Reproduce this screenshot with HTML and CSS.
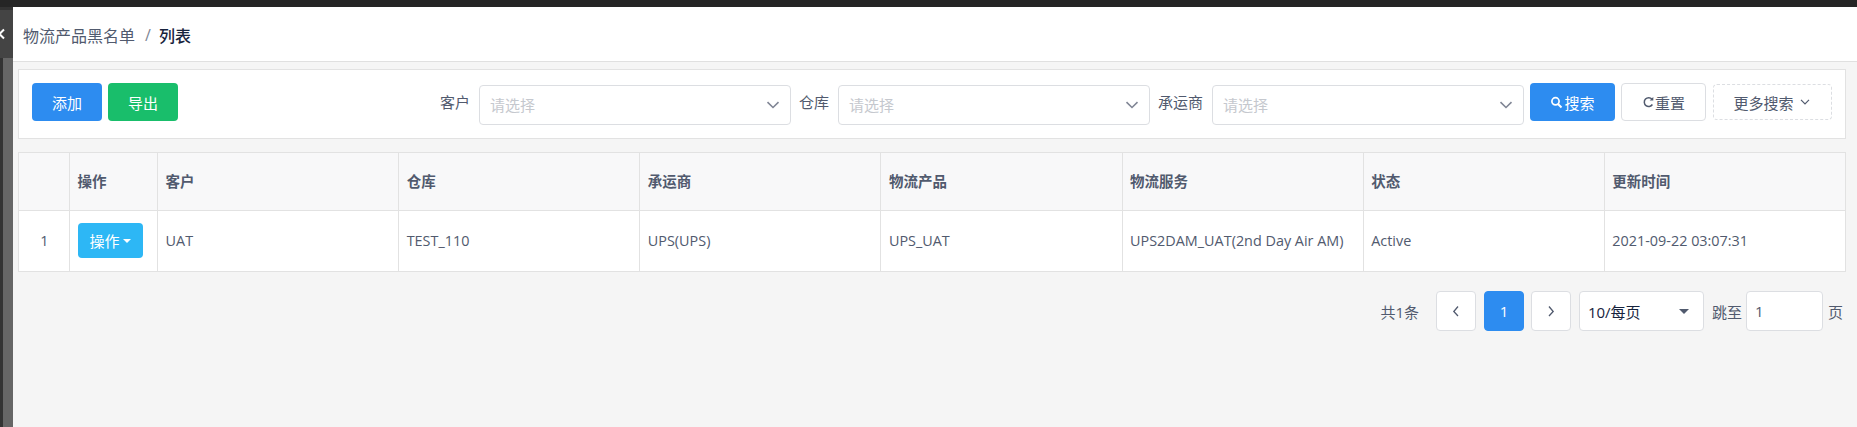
FILE: index.html
```html
<!DOCTYPE html>
<html lang="zh">
<head>
<meta charset="utf-8">
<title>物流产品黑名单</title>
<link rel="stylesheet" href="styles.css">
</head>
<body>
<div class="topbar"></div>
<div class="app">
  <aside class="rail">
    <div class="rail-handle"><svg width="8" height="12" viewBox="0 0 8 12"><path d="M7 1.500 2.500 6 7 10.500" fill="none" stroke="#fff" stroke-width="2"/></svg></div>
  </aside>
  <main class="main">
    <header class="crumbs"><span class="crumb">物流产品黑名单</span><span class="sep">/</span><strong class="crumb-cur">列表</strong></header>
    <div class="content">
      <section class="toolbar">
        <button class="btn btn-blue btn-wide">添加</button>
        <button class="btn btn-green btn-wide">导出</button>
        <div class="filters">
          <label class="flabel">客户</label>
          <div class="select"><span>请选择</span><svg width="14" height="8" viewBox="0 0 14 8"><path d="M1.500 1.200 7 6.500l5.500-5.300" fill="none" stroke="#808695" stroke-width="1.600"/></svg></div>
          <label class="flabel">仓库</label>
          <div class="select"><span>请选择</span><svg width="14" height="8" viewBox="0 0 14 8"><path d="M1.500 1.200 7 6.500l5.500-5.300" fill="none" stroke="#808695" stroke-width="1.600"/></svg></div>
          <label class="flabel">承运商</label>
          <div class="select"><span>请选择</span><svg width="14" height="8" viewBox="0 0 14 8"><path d="M1.500 1.200 7 6.500l5.500-5.300" fill="none" stroke="#808695" stroke-width="1.600"/></svg></div>
          <button class="btn btn-blue btn-icon"><svg width="13" height="13" viewBox="0 0 13 13"><circle cx="5.500" cy="5.300" r="3.600" fill="none" stroke="#fff" stroke-width="1.700"/><path d="m8 8 3.500 3.500" stroke="#fff" stroke-width="2"/></svg>搜索</button>
          <button class="btn btn-plain btn-icon"><svg width="12" height="13" viewBox="0 0 12 13"><path d="M10 3.200A4.400 4.400 0 1 0 10.400 8.500" fill="none" stroke="#515a6e" stroke-width="1.500"/><path d="M7.700 4.600h3.600V1z" fill="#515a6e"/></svg>重置</button>
          <button class="btn btn-dashed">更多搜索<svg width="10" height="6" viewBox="0 0 10 6"><path d="M1 .8 5 4.800 9 .8" fill="none" stroke="#515a6e" stroke-width="1.200"/></svg></button>
        </div>
      </section>
      <table class="grid">
        <colgroup><col class="c-idx"><col class="c-op"><col class="c-wide"><col class="c-wide"><col class="c-wide"><col class="c-wide"><col class="c-wide"><col class="c-wide"><col class="c-wide"></colgroup>
        <thead>
          <tr><th></th><th>操作</th><th>客户</th><th>仓库</th><th>承运商</th><th>物流产品</th><th>物流服务</th><th>状态</th><th>更新时间</th></tr>
        </thead>
        <tbody>
          <tr>
            <td class="idx">1</td>
            <td><button class="btn-op">操作<i class="caret"></i></button></td>
            <td>UAT</td><td>TEST_110</td><td>UPS(UPS)</td><td>UPS_UAT</td><td>UPS2DAM_UAT(2nd Day Air AM)</td><td>Active</td><td>2021-09-22 03:07:31</td>
          </tr>
        </tbody>
      </table>
      <nav class="pager">
        <span class="total">共1条</span>
        <a class="pg pg-prev"><svg width="8" height="12" viewBox="0 0 8 12"><path d="M6 1.500 1.800 6.500 6 11" fill="none" stroke="#515a6e" stroke-width="1.300"/></svg></a>
        <a class="pg pg-on">1</a>
        <a class="pg pg-next"><svg width="8" height="12" viewBox="0 0 8 12"><path d="M2 1.500 6.200 6.500 2 11" fill="none" stroke="#515a6e" stroke-width="1.300"/></svg></a>
        <div class="size">10/每页<i class="caret caret-dark"></i></div>
        <span class="jump">跳至</span>
        <div class="jump-input">1</div>
        <span class="jump-end">页</span>
      </nav>
    </div>
  </main>
</div>
</body>
</html>
```
FILE: styles.css
```css
* { box-sizing: border-box; }
html, body { margin: 0; height: 100%; }
body {
  display: flex;
  flex-direction: column;
  height: 427px;
  overflow: hidden;
  font-family: "Open Sans", "Noto Sans CJK SC", sans-serif;
  font-size: 15px;
  color: #515a6e;
  background: #f5f5f5;
}
.topbar { height: 7px; flex: none; background: #252525; }
.app { flex: 1; display: flex; min-height: 0; }
.rail {
  width: 13px;
  flex: none;
  position: relative;
  background: #666;
  border-left: 3px solid #333;
  border-top: 3px solid #333;
}
.rail-handle {
  position: absolute;
  left: -3px;
  top: 0;
  width: 13px;
  height: 48px;
  background: #444;
  display: flex;
  align-items: center;
}
.rail-handle svg { margin-left: -3px; }
.main { flex: 1; min-width: 0; display: flex; flex-direction: column; }
.crumbs {
  height: 55px;
  flex: none;
  background: #fff;
  border-bottom: 1px solid #e0e0e0;
  display: flex;
  align-items: center;
  padding: 1px 10px 0;
  font-size: 16px;
}
.crumb { color: #515a6e; }
.sep { color: #808695; margin: 0 8px 0 10px; }
.crumb-cur { color: #17233d; font-weight: 500; }
.content { padding: 7px 11px 0 5px; display: flex; flex-direction: column; }
.toolbar {
  height: 70px;
  background: #fff;
  border: 1px solid #e2e2e2;
  display: flex;
  align-items: flex-start;
  padding: 13px 13px 0 13px;
  gap: 6px;
}
.btn {
  height: 38px;
  border-radius: 4px;
  border: 1px solid transparent;
  font: inherit;
  padding: 0;
  display: inline-flex;
  align-items: center;
  justify-content: center;
}
.btn-wide { width: 70px; }
.btn-blue { background: #2d8cf0; color: #fff; }
.btn-green { background: #19be6b; color: #fff; }
.btn-plain { background: #fff; border-color: #dcdee2; color: #515a6e; }
.btn-icon { width: 85px; gap: 1px; }
.btn-dashed {
  width: 119px;
  height: 36px;
  margin-top: 1px;
  margin-left: 1px;
  padding-right: 2px;
  background: #fff;
  border: 1px dashed #dcdee2;
  color: #515a6e;
  gap: 6px;
}
.filters { flex: 1; display: flex; align-items: flex-start; justify-content: flex-end; gap: 6px; }
.flabel { margin: 9px 3px 0 2px; line-height: 20px; }
.select {
  width: 312px;
  flex: none;
  height: 40px;
  margin-top: 2px;
  background: #fff;
  border: 1px solid #dcdee2;
  border-radius: 4px;
  display: flex;
  align-items: center;
  justify-content: space-between;
  padding: 0 10px 2px 10px;
  color: #c5c8ce;
}
.select svg { margin-top: 2px; }
.grid {
  margin-top: 13px;
  width: 1828px;
  table-layout: fixed;
  border-collapse: collapse;
  background: #fff;
  border: 1px solid #e2e2e2;
}
.c-idx { width: 51px; }
.c-op { width: 88px; }
.c-wide { width: 241px; }
.grid th, .grid td { border: 1px solid #e2e2e2; padding: 0 7px 0 7.500px; text-align: left; font-weight: 400; white-space: nowrap; }
.grid th { height: 58px; background: #f8f8f9; font-weight: 700; font-size: 14.500px; padding-bottom: 2px; }
.grid td { height: 61px; font-size: 14.400px; padding-bottom: 1px; }
.grid td.idx { text-align: center; color: #515a6e; }
.btn-op {
  width: 65px;
  height: 35px;
  border: 0;
  border-radius: 4px;
  background: #2db7f5;
  color: #fff;
  font-family: inherit;
  font-size: 15px;
  padding: 0;
  display: inline-flex;
  align-items: center;
  justify-content: center;
  gap: 3px;
  vertical-align: middle;
}
.caret { display: inline-block; width: 0; height: 0; border: 4px solid transparent; border-top-color: #fff; border-bottom-width: 0; }
.caret-dark { border-top-color: #515a6e; border-width: 5px 5px 0; }
.pager { margin-top: 19px; height: 40px; display: flex; align-items: center; justify-content: flex-end; padding-right: 3px; }
.total { margin-right: 17px; }
.pg {
  width: 40px;
  height: 40px;
  border-radius: 4px;
  background: #fff;
  border: 1px solid #dcdee2;
  display: flex;
  align-items: center;
  justify-content: center;
}
.pg-on { background: #2d8cf0; border-color: #2d8cf0; color: #fff; margin: 0 7px 0 8px; }
.size {
  width: 125px;
  height: 40px;
  margin-left: 8px;
  background: #fff;
  border: 1px solid #dcdee2;
  border-radius: 4px;
  color: #17233d;
  display: flex;
  align-items: center;
  justify-content: space-between;
  padding: 0 14px 0 8px;
}
.jump { margin-left: 8px; margin-right: 4px; }
.jump-input {
  width: 77px;
  height: 40px;
  background: #fff;
  border: 1px solid #dcdee2;
  border-radius: 4px;
  display: flex;
  align-items: center;
  padding-left: 8px;
}
.jump-end { margin-left: 5px; }
```
